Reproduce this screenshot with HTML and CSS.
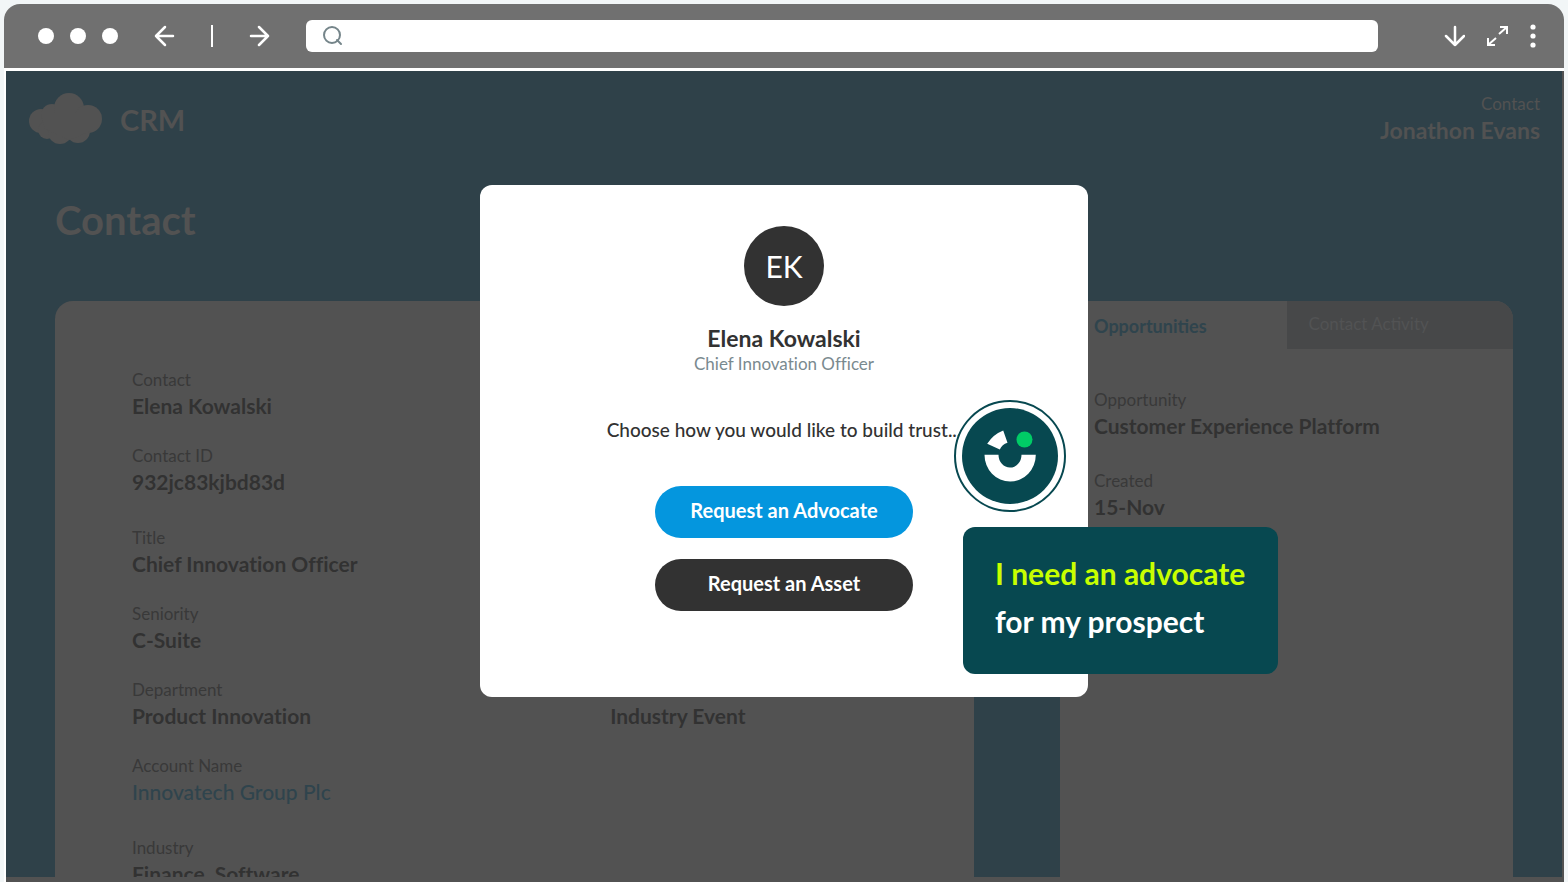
FILE: index.html
```html
<!DOCTYPE html>
<html lang="en">
<head>
    <meta charset="UTF-8">
    <meta name="viewport" content="width=device-width, initial-scale=1.0">
    <title>CRM - Contact</title>
    <link rel="stylesheet" href="styles.css">
</head>
<body>
    <div class="browser">
        <div class="toolbar">
            <div class="dots"><span></span><span></span><span></span></div>
            <button class="icon-btn" aria-label="Back">
                <svg width="21" height="22" viewBox="0 0 21 22"><path d="M19 11H2M11 2L2 11l9 9"/></svg>
            </button>
            <span class="divider"></span>
            <button class="icon-btn" aria-label="Forward">
                <svg width="21" height="22" viewBox="0 0 21 22"><path d="M2 11h17M10 2l9 9-9 9"/></svg>
            </button>
            <div class="address">
                <svg width="20" height="20" viewBox="0 0 20 20"><circle cx="9" cy="9" r="8"/><path d="M14 14l4 4"/></svg>
                <input type="text" aria-label="Address">
            </div>
            <div class="tools">
                <button class="icon-btn" aria-label="Download">
                    <svg width="21" height="22" viewBox="0 0 21 22"><path d="M11 2v18M2 11l9 9 9-9"/></svg>
                </button>
                <button class="icon-btn" aria-label="Full screen">
                    <svg class="thin" width="21" height="22" viewBox="0 0 21 22"><path d="M12 9l8-7M13 2h7v7M9 13l-8 7M1 13v7h7"/></svg>
                </button>
                <button class="icon-btn" aria-label="Menu">
                    <svg class="solid" width="6" height="24" viewBox="0 0 6 24"><circle cx="3" cy="3" r="2.600"/><circle cx="3" cy="12" r="2.600"/><circle cx="3" cy="21" r="2.600"/></svg>
                </button>
            </div>
        </div>

        <div class="screen">
            <header class="header">
                <div class="logo">
                    <svg width="73" height="52" viewBox="0 0 73 52">
                        <circle cx="12" cy="28" r="12"/>
                        <circle cx="23" cy="22" r="11"/>
                        <circle cx="40" cy="15" r="15"/>
                        <circle cx="59" cy="26" r="14"/>
                        <circle cx="18" cy="37" r="9"/>
                        <circle cx="31" cy="39" r="12"/>
                        <circle cx="49" cy="38" r="12"/>
                        <path d="M12 20h50v18L40 47 16 36z"/>
                    </svg>
                    <span>CRM</span>
                </div>
                <div class="user">
                    <span class="label">Contact</span>
                    <span class="value">Jonathon Evans</span>
                </div>
            </header>

            <h1>Contact</h1>

            <main class="cards">
                <section class="card details">
                    <div class="group">
                        <div class="field"><span class="label">Contact</span><span class="value">Elena Kowalski</span></div>
                        <div class="field"><span class="label">Contact ID</span><span class="value">932jc83kjbd83d</span></div>
                    </div>
                    <div class="group">
                        <div class="field"><span class="label">Title</span><span class="value">Chief Innovation Officer</span></div>
                        <div class="field"><span class="label">Seniority</span><span class="value">C-Suite</span></div>
                        <div class="row">
                            <div class="field"><span class="label">Department</span><span class="value">Product Innovation</span></div>
                            <div class="field"><span class="value">Industry Event</span></div>
                        </div>
                        <div class="field"><span class="label">Account Name</span><a class="value" href="#">Innovatech Group Plc</a></div>
                    </div>
                    <div class="group">
                        <div class="field"><span class="label">Industry</span><span class="value">Finance, Software</span></div>
                    </div>
                </section>

                <section class="card">
                    <div class="tabs">
                        <button class="tab active">Opportunities</button>
                        <button class="tab">Contact Activity</button>
                    </div>
                    <div class="panel">
                        <div class="field"><span class="label">Opportunity</span><span class="value">Customer Experience Platform</span></div>
                        <div class="field"><span class="label">Created</span><span class="value">15-Nov</span></div>
                    </div>
                </section>
            </main>

            <div class="overlay">
                <div class="modal" role="dialog" aria-label="Build trust">
                    <div class="avatar">EK</div>
                    <h2>Elena Kowalski</h2>
                    <p class="role">Chief Innovation Officer</p>
                    <p class="prompt">Choose how you would like to build trust...</p>
                    <button class="btn btn-blue">Request an Advocate</button>
                    <button class="btn btn-dark">Request an Asset</button>

                    <div class="helper">
                        <svg width="112" height="112" viewBox="0 0 112 112">
                            <circle cx="56" cy="56" r="55" fill="#fff" stroke="#074850" stroke-width="2"/>
                            <circle cx="56" cy="56" r="48" fill="#074850"/>
                            <path fill="#fff" d="M30.500 54.700H44.500a11.500 12.800 0 0 0 23 0H81.800a25.650 26.800 0 0 1-51.300 0z"/>
                            <path fill="#fff" d="M33.200 43.800Q39 34.500 49.200 30.500L53.500 42.800Q48 44.500 45.800 49.500z"/>
                            <circle cx="70.500" cy="39.500" r="8" fill="#00cc66"/>
                        </svg>
                        <div class="bubble">
                            <p class="lime">I need an advocate</p>
                            <p>for my prospect</p>
                        </div>
                    </div>
                </div>
            </div>
        </div>
    </div>
</body>
</html>
```
FILE: styles.css
```css
* {
    box-sizing: border-box;
}
body {
    margin: 0;
    height: 100vh;
    padding: 4px 4px 0;
    background: #f2f6f7;
    font-family: Lato, "Liberation Sans", sans-serif;
    font-variant-ligatures: none;
    overflow: hidden;
}
h1, h2, p {
    margin: 0;
}
button {
    border: none;
    padding: 0;
    background: none;
    font-family: inherit;
    cursor: pointer;
}
.browser {
    display: flex;
    flex-direction: column;
    height: 100%;
    background: white;
    border-radius: 16px 16px 0 0;
}

/* toolbar */
.toolbar {
    display: flex;
    align-items: center;
    gap: 36px;
    height: 64px;
    padding: 0 28px 0 34px;
    background: #707070;
    border-radius: 16px 16px 0 0;
}
.dots {
    display: flex;
    gap: 16px;
}
.dots span {
    width: 16px;
    height: 16px;
    border-radius: 50%;
    background: white;
}
.icon-btn {
    display: flex;
}
.icon-btn svg {
    fill: none;
    stroke: white;
    stroke-width: 2.5;
    stroke-linecap: round;
    stroke-linejoin: round;
}
.icon-btn .solid {
    fill: white;
    stroke: none;
}
.icon-btn .thin {
    stroke-width: 2;
    stroke-linecap: butt;
    stroke-linejoin: miter;
}
.divider {
    width: 2px;
    height: 22px;
    background: white;
}
.address {
    flex: 1;
    display: flex;
    align-items: center;
    gap: 10px;
    height: 32px;
    padding: 0 17px;
    background: white;
    border-radius: 6px;
}
.address svg {
    fill: none;
    stroke: #75858a;
    stroke-width: 2;
    stroke-linecap: round;
}
.address input {
    flex: 1;
    border: none;
    outline: none;
    font-size: 16px;
}
.tools {
    display: flex;
    align-items: center;
    gap: 22px;
    margin-left: 30px;
}

/* app */
.screen {
    position: relative;
    flex: 1;
    min-height: 0;
    margin: 3px 0 0 2px;
    border-right: 2px solid #525252;
    border-bottom: 5px solid #525252;
    background: #2f4149;
    color: #525252;
    overflow: hidden;
}
.header {
    display: flex;
    justify-content: space-between;
    padding: 22px 22px 0 23px;
}
.logo {
    display: flex;
    align-items: center;
    gap: 18px;
    font-size: 29px;
    font-weight: bold;
}
.logo svg {
    fill: #525252;
}
.label, .value {
    display: block;
}
.label {
    font-size: 17px;
    line-height: 22px;
}
.value {
    font-size: 21px;
    line-height: 30px;
    font-weight: bold;
}
.user {
    text-align: right;
}
.user .value {
    font-size: 23px;
}
h1 {
    padding: 51px 49px 57px;
    font-size: 40px;
    line-height: 48px;
}
.cards {
    display: grid;
    grid-template-columns: 919fr 453fr;
    gap: 86px;
    padding: 0 49px;
}
.card {
    min-height: 640px;
    background: #525252;
    border-radius: 18px 18px 0 0;
    overflow: hidden;
}
.card .label {
    color: #393939;
}
.card .value {
    color: #323232;
}
.card a.value {
    color: #2f444d;
    font-weight: 500;
    text-decoration: none;
}
.details {
    display: flex;
    flex-direction: column;
    gap: 30px;
    padding: 68px 77px 0;
}
.group {
    display: flex;
    flex-direction: column;
    gap: 24px;
}
.row {
    display: grid;
    grid-template-columns: 5fr 3fr;
    align-items: end;
}
.tabs {
    display: grid;
    grid-template-columns: 1fr 1fr;
    height: 48px;
}
.tab {
    padding: 0 22px 4px;
    background: #474849;
    color: #525354;
    font-size: 17px;
    text-align: left;
}
.tab.active {
    padding: 2px 34px 0;
    background: none;
    color: #2f444d;
    font-size: 18px;
    font-weight: bold;
}
.panel {
    display: flex;
    flex-direction: column;
    gap: 29px;
    padding: 40px 34px 0;
}

/* modal */
.overlay {
    position: absolute;
    inset: 0;
    display: flex;
    justify-content: center;
    align-items: flex-start;
    padding-top: 114px;
}
.modal {
    position: relative;
    display: flex;
    flex-direction: column;
    align-items: center;
    width: 608px;
    padding: 41px 20px 86px;
    background: white;
    border-radius: 12px;
    color: #323232;
}
.avatar {
    width: 80px;
    height: 80px;
    margin-bottom: 18px;
    border-radius: 50%;
    background: #323232;
    color: white;
    font-size: 30px;
    line-height: 80px;
    text-align: center;
}
h2 {
    font-size: 23px;
    line-height: 28px;
}
.role {
    color: #7a8a8f;
    font-size: 17px;
    line-height: 24px;
}
.prompt {
    margin: 41px 0 43px;
    font-size: 19px;
    line-height: 26px;
    font-weight: 500;
}
.btn {
    width: 258px;
    height: 52px;
    padding-bottom: 5px;
    border-radius: 26px;
    color: white;
    font-size: 20px;
    font-weight: bold;
}
.btn-blue {
    margin-bottom: 21px;
    background: #0496de;
}
.btn-dark {
    background: #323232;
}

/* assistant */
.helper {
    position: absolute;
    top: 215px;
    left: 474px;
    width: 324px;
}
.helper svg {
    display: block;
    margin-bottom: 15px;
}
.bubble {
    margin-left: 9px;
    padding: 22px 32px 29px;
    border-radius: 12px;
    background: #074850;
    color: white;
    font-size: 30px;
    line-height: 48px;
    font-weight: bold;
}
.lime {
    color: #c8ff00;
}
```
